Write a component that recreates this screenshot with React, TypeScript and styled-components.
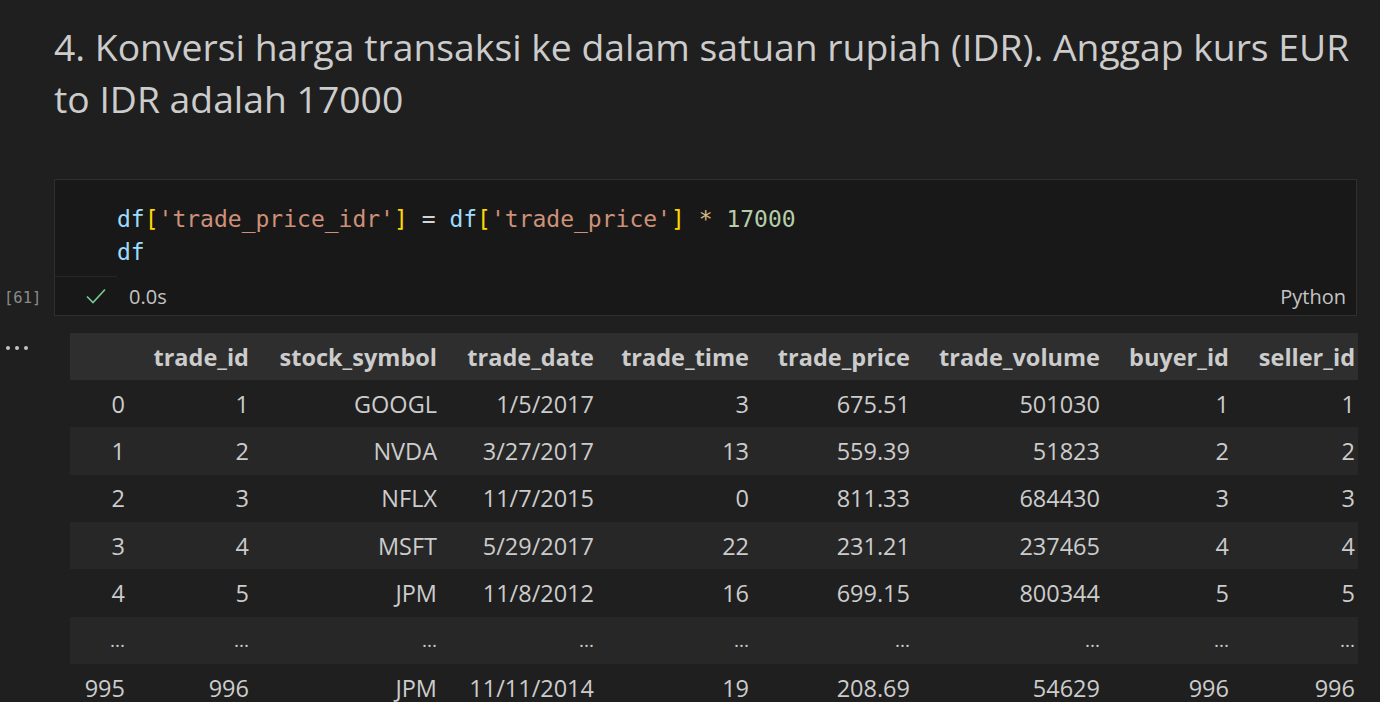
import React from "react";
import styled, { createGlobalStyle } from "styled-components";

const Global = createGlobalStyle`
  html, body { margin: 0; padding: 0; background: #1f1f1f; }
  body { overflow: hidden; }
  * { box-sizing: border-box; }
`;

const UI = `"Segoe UI", "Open Sans", "Noto Sans", sans-serif`;
const MONO = `Consolas, "DejaVu Sans Mono", "Liberation Mono", monospace`;

const Page = styled.div`
  width: 1380px;
  height: 702px;
  background: #1f1f1f;
  color: #cccccc;
  font-family: ${UI};
  overflow: hidden;
`;

const Title = styled.h2`
  margin: 0;
  padding: 21px 20px 0 54px;
  height: 179px;
  font-weight: 400;
  font-size: 37.3px;
  line-height: 52px;
  color: #cccccc;
`;

const CellRow = styled.div`
  display: grid;
  grid-template-columns: 54px 1303px;
`;

const Gutter = styled.div`
  display: flex;
  flex-direction: column;
  justify-content: flex-end;
`;

const ExecCount = styled.div`
  height: 37px;
  display: flex;
  align-items: center;
  padding-left: 4px;
  font-family: ${MONO};
  font-size: 15.5px;
  color: #8b8b8b;
`;

const Cell = styled.div`
  background: #181818;
  border: 1px solid #2f2f2f;
  height: 137px;
  display: flex;
  flex-direction: column;
`;

const Code = styled.pre`
  margin: 0;
  padding: 23px 0 0 62px;
  font-family: ${MONO};
  font-size: 23px;
  line-height: 33px;
  color: #d4d4d4;
  height: 96px;
`;

const Tok = styled.span<{ $c: string }>`
  color: ${(p) => p.$c};
`;

const StatusSep = styled.div`
  width: 62px;
  height: 1px;
  background: #262626;
`;

const Status = styled.div`
  flex: 1;
  display: flex;
  align-items: center;
  padding: 0 10px 0 30px;
  font-size: 20px;
  color: #c4c4c4;
`;

const CheckIcon = styled.svg`
  width: 22px;
  height: 22px;
  margin-right: 22px;
`;

const Spacer = styled.div`
  flex: 1;
`;

const OutputRow = styled.div`
  display: grid;
  grid-template-columns: 70px 1288px;
  margin-top: 17px;
`;

const More = styled.div`
  padding: 0 0 0 6px;
  display: flex;
  gap: 5px;
`;

const Dot = styled.span`
  width: 4px;
  height: 4px;
  border-radius: 50%;
  background: #c4c4c4;
  margin-top: 13px;
`;

const TableWrap = styled.div`
  overflow: hidden;
`;

const Table = styled.table`
  border-collapse: collapse;
  table-layout: fixed;
  width: 1299px;
  font-size: 23.5px;
  color: #cccccc;
`;

const HeadRow = styled.tr`
  background: #2e2e2e;
  height: 47px;
`;

const Row = styled.tr<{ $odd: boolean }>`
  background: ${(p) => (p.$odd ? "#272727" : "#1f1f1f")};
  height: 47.33px;
`;

const Th = styled.th`
  font-weight: 700;
  text-align: right;
  padding: 0 14px 0 0;
  white-space: nowrap;
  color: #cccccc;
`;

const Td = styled.td<{ $dots?: boolean }>`
  text-align: right;
  padding: 0 14px 0 0;
  white-space: nowrap;
  font-size: ${(p) => (p.$dots ? "19px" : "inherit")};
`;

const widths = [69, 124, 188, 157, 155, 161, 190, 129, 126];
const headers = [
  "",
  "trade_id",
  "stock_symbol",
  "trade_date",
  "trade_time",
  "trade_price",
  "trade_volume",
  "buyer_id",
  "seller_id",
];

const rows: string[][] = [
  ["0", "1", "GOOGL", "1/5/2017", "3", "675.51", "501030", "1", "1"],
  ["1", "2", "NVDA", "3/27/2017", "13", "559.39", "51823", "2", "2"],
  ["2", "3", "NFLX", "11/7/2015", "0", "811.33", "684430", "3", "3"],
  ["3", "4", "MSFT", "5/29/2017", "22", "231.21", "237465", "4", "4"],
  ["4", "5", "JPM", "11/8/2012", "16", "699.15", "800344", "5", "5"],
  ["...", "...", "...", "...", "...", "...", "...", "...", "..."],
  ["995", "996", "JPM", "11/11/2014", "19", "208.69", "54629", "996", "996"],
];

export default function App() {
  return (
    <Page>
      <Global />
      <Title>
        4. Konversi harga transaksi ke dalam satuan rupiah (IDR). Anggap kurs EUR to IDR adalah 17000
      </Title>
      <CellRow>
        <Gutter>
          <ExecCount>[61]</ExecCount>
        </Gutter>
        <Cell>
          <Code>
            <Tok $c="#9cdcfe">df</Tok>
            <Tok $c="#ffd700">[</Tok>
            <Tok $c="#ce9178">'trade_price_idr'</Tok>
            <Tok $c="#ffd700">]</Tok>
            {" = "}
            <Tok $c="#9cdcfe">df</Tok>
            <Tok $c="#ffd700">[</Tok>
            <Tok $c="#ce9178">'trade_price'</Tok>
            <Tok $c="#ffd700">]</Tok>
            {" "}
            <Tok $c="#d7ba7d">*</Tok>
            {" "}
            <Tok $c="#b5cea8">17000</Tok>
            {"\n"}
            <Tok $c="#9cdcfe">df</Tok>
          </Code>
          <StatusSep />
          <Status>
            <CheckIcon viewBox="0 0 22 22">
              <path d="M2 11.5 L8 17.5 L20 4.5" fill="none" stroke="#73c991" strokeWidth="1.7" />
            </CheckIcon>
            <span>0.0s</span>
            <Spacer />
            <span>Python</span>
          </Status>
        </Cell>
      </CellRow>
      <OutputRow>
        <More>
          <Dot />
          <Dot />
          <Dot />
        </More>
        <TableWrap>
          <Table>
            <colgroup>
              {widths.map((w, i) => (
                <col key={i} style={{ width: w }} />
              ))}
            </colgroup>
            <thead>
              <HeadRow>
                {headers.map((h, i) => (
                  <Th key={i}>{h}</Th>
                ))}
              </HeadRow>
            </thead>
            <tbody>
              {rows.map((r, i) => (
                <Row key={i} $odd={i % 2 === 1}>
                  {r.map((c, j) => (
                    <Td key={j} $dots={c === "..."}>
                      {c}
                    </Td>
                  ))}
                </Row>
              ))}
            </tbody>
          </Table>
        </TableWrap>
      </OutputRow>
    </Page>
  );
}
